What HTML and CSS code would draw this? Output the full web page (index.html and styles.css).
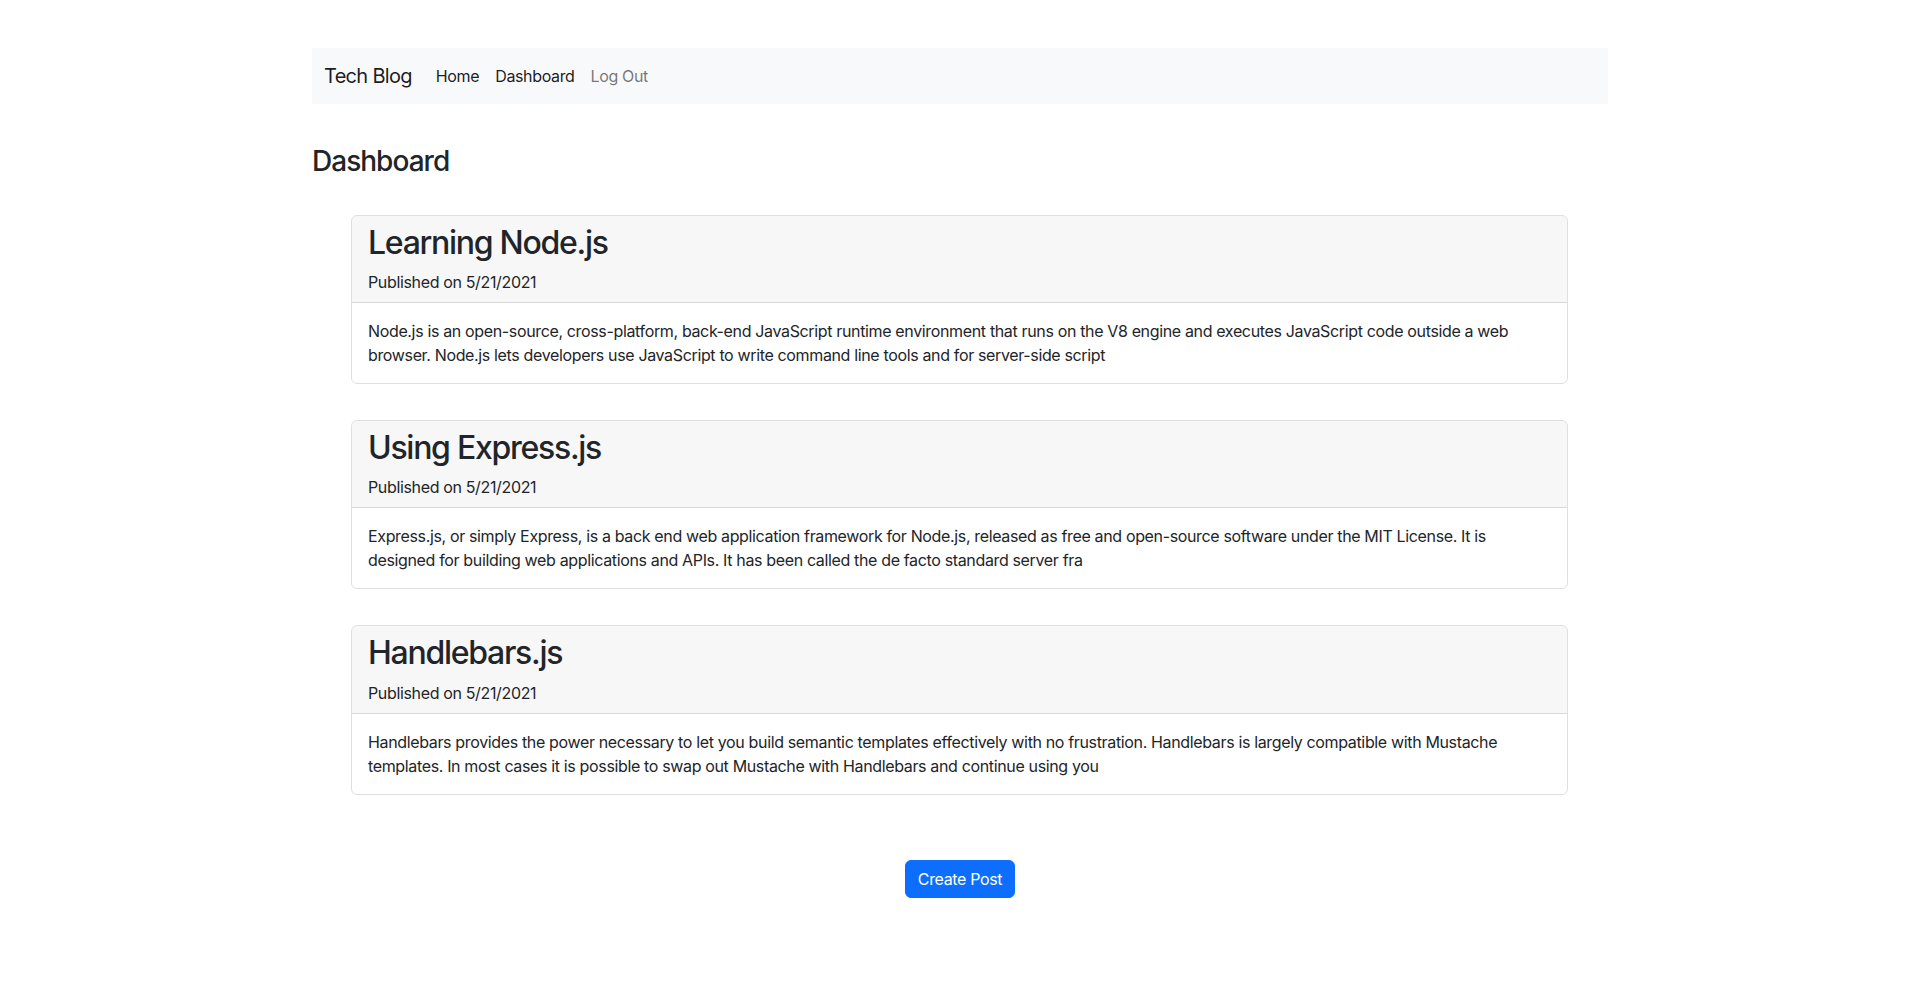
FILE: index.html
```html
<!DOCTYPE html>
<html lang="en">
<head>
<meta charset="utf-8">
<title>Tech Blog</title>
<link rel="stylesheet" href="styles.css">
</head>
<body>
<div class="container">
  <nav class="navbar">
    <a class="brand" href="#">Tech Blog</a>
    <ul class="nav">
      <li><a class="nav-link active" href="#">Home</a></li>
      <li><a class="nav-link active" href="#">Dashboard</a></li>
      <li><a class="nav-link" href="#">Log Out</a></li>
    </ul>
  </nav>

  <h3 class="page-title">Dashboard</h3>

  <div class="posts">
    <div class="card">
      <div class="card-header">
        <h2 class="post-title">Learning Node.js</h2>
        <div class="post-date">Published on 5/21/2021</div>
      </div>
      <div class="card-body">Node.js is an open-source, cross-platform, back-end JavaScript runtime environment that runs on the V8 engine and executes JavaScript code outside a web browser. Node.js lets developers use JavaScript to write command line tools and for server-side script</div>
    </div>
    <div class="card">
      <div class="card-header">
        <h2 class="post-title">Using Express.js</h2>
        <div class="post-date">Published on 5/21/2021</div>
      </div>
      <div class="card-body">Express.js, or simply Express, is a back end web application framework for Node.js, released as free and open-source software under the MIT License. It is designed for building web applications and APIs. It has been called the de facto standard server fra</div>
    </div>
    <div class="card">
      <div class="card-header">
        <h2 class="post-title">Handlebars.js</h2>
        <div class="post-date">Published on 5/21/2021</div>
      </div>
      <div class="card-body">Handlebars provides the power necessary to let you build semantic templates effectively with no frustration. Handlebars is largely compatible with Mustache templates. In most cases it is possible to swap out Mustache with Handlebars and continue using you</div>
    </div>
  </div>

  <div class="actions">
    <button class="btn-primary" type="button">Create Post</button>
  </div>
</div>
</body>
</html>
```

FILE: styles.css
```css
* { box-sizing: border-box; }
html, body { margin: 0; padding: 0; }
body {
  font-family: Inter, "Liberation Sans", sans-serif;
  font-size: 16px;
  line-height: 1.5;
  letter-spacing: -0.022em;
  color: #212529;
  background: #fff;
}
.container {
  width: 1320px;
  margin: 0 auto;
  padding: 48px 12px 0;
}
.navbar {
  display: flex;
  align-items: center;
  background: #f8f9fa;
  padding: 8px 12px;
}
.brand {
  font-size: 20px;
  line-height: 30px;
  letter-spacing: -0.035em;
  padding: 5px 0;
  margin-right: 16px;
  color: rgba(0,0,0,.9);
  text-decoration: none;
}
.nav {
  display: flex;
  list-style: none;
  margin: 0;
  padding: 0;
}
.nav-link {
  display: block;
  padding: 8px;
  color: rgba(0,0,0,.55);
  text-decoration: none;
}
.nav-link.active { color: rgba(0,0,0,.9); }
.page-title {
  font-size: 28px;
  font-weight: 500;
  line-height: 1.2;
  letter-spacing: -0.035em;
  margin: 41px 0 0;
}
.posts {
  padding: 36px 40px 0 39px;
}
.card {
  border: 1px solid rgba(0,0,0,.125);
  border-radius: 6px;
  margin-bottom: 36px;
  overflow: hidden;
}
.card:last-child { margin-bottom: 0; }
.card-header {
  background: rgba(0,0,0,.03);
  border-bottom: 1px solid rgba(0,0,0,.125);
  padding: 8px 16px;
}
.post-title {
  font-size: 32px;
  font-weight: 500;
  line-height: 1.2;
  letter-spacing: -0.04em;
  margin: 0 0 8px;
}
.post-date { line-height: 24px; }
.card-body { padding: 16px; }
.actions {
  display: flex;
  justify-content: center;
  padding-top: 65px;
}
.btn-primary {
  font-family: inherit;
  font-size: 16px;
  line-height: 24px;
  letter-spacing: -0.022em;
  padding: 6px 12px;
  color: #fff;
  background: #0d6efd;
  border: 1px solid #0d6efd;
  border-radius: 6px;
  cursor: pointer;
}
```
